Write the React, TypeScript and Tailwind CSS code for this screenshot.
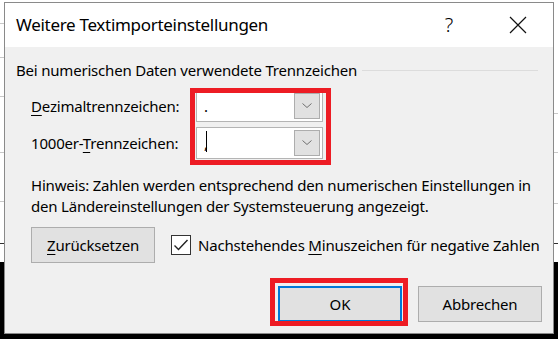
import React from "react";

const font = { fontFamily: '"Noto Sans", "Open Sans", Arial, sans-serif' };

function Chevron() {
  return (
    <svg width="12" height="8" viewBox="0 0 12 8" className="block">
      <path d="M1.5 1.5 L6 5.5 L10.5 1.5" fill="none" stroke="#707070" strokeWidth="1" />
    </svg>
  );
}

function Combo({ value, cursor }: { value: string; cursor?: boolean }) {
  return (
    <div className="flex h-[32px] w-[127px] border border-[#b4b4b4] bg-white p-[2px]">
      <div className="relative flex flex-1 items-center pl-[5px] text-[15px] text-black">
        <span className="leading-none">{value}</span>
        {cursor && <span className="absolute left-[7px] top-[1px] h-[21px] w-px bg-black" />}
      </div>
      <div className="flex w-[26px] items-center justify-center border border-[#adadad] bg-[#e1e1e1]">
        <Chevron />
      </div>
    </div>
  );
}

function Btn({ children, focused }: { children: React.ReactNode; focused?: boolean }) {
  return (
    <div
      className={
        "flex h-[36px] w-[124px] items-center justify-center bg-[#e1e1e1] text-[15px] text-black " +
        (focused ? "border-2 border-[#0078d7]" : "border border-[#adadad]")
      }
    >
      {children}
    </div>
  );
}

export default function App() {
  return (
    <div className="relative h-[339px] w-[558px] overflow-hidden bg-white" style={font}>
      {/* background sheet lines */}
      <div className="absolute left-0 top-[23px] h-px w-[6px] bg-[#c8c8c8]" />
      <div className="absolute left-0 top-[57px] h-px w-[6px] bg-[#c8c8c8]" />
      <div className="absolute left-0 top-[96px] h-px w-[6px] bg-[#c8c8c8]" />
      <div className="absolute left-0 top-[152px] h-px w-[6px] bg-[#c8c8c8]" />
      <div className="absolute left-0 top-[201px] h-px w-[6px] bg-[#c8c8c8]" />
      <div className="absolute left-0 top-[243px] h-px w-[6px] bg-[#303030]" />
      <div className="absolute right-0 top-[113px] h-px w-[6px] bg-[#c8c8c8]" />
      <div className="absolute right-0 top-[152px] h-px w-[6px] bg-[#c8c8c8]" />
      <div className="absolute right-0 top-[203px] h-px w-[6px] bg-[#c8c8c8]" />
      <div className="absolute right-0 top-[243px] h-px w-[6px] bg-[#303030]" />
      <div className="absolute bottom-0 left-0 h-[77px] w-full bg-black" />

      {/* dialog window */}
      <div className="absolute left-[4px] top-[2px] flex h-[332px] w-[550px] flex-col border border-[#8a8a8a]">
        <div className="flex h-[44px] items-center bg-white pl-[11px] text-[17px] text-black">
          <span className="flex-1 tracking-[-0.3px]">Weitere Textimporteinstellungen</span>
          <span className="w-[20px] text-center text-[20px] font-light">?</span>
          <div className="ml-[49px] mr-[25px] flex h-[20px] w-[20px] items-center justify-center">
            <svg width="18" height="18" viewBox="0 0 18 18">
              <path d="M1 1 L17 17 M17 1 L1 17" stroke="#111" strokeWidth="1.2" fill="none" />
            </svg>
          </div>
        </div>

        <div className="relative flex flex-1 flex-col bg-[#f0f0f0] px-[11px] text-[15px] text-black">
          {/* group label */}
          <div className="mt-[13px] flex h-[21px] items-center">
            <span className="tracking-[-0.2px]">Bei numerischen Daten verwendete Trennzeichen</span>
            <div className="ml-[5px] mr-[4px] h-px flex-1 bg-[#dcdcdc]" />
          </div>

          <div className="ml-[15px] mt-[9px] flex flex-col gap-[5px]">
            <div className="flex items-center">
              <span className="w-[165px] tracking-[-0.2px]">
                <span className="underline underline-offset-[3px]">D</span>ezimaltrennzeichen:
              </span>
              <Combo value="." />
            </div>
            <div className="flex items-center">
              <span className="w-[165px] tracking-[-0.2px]">
                1000er-<span className="underline underline-offset-[3px]">T</span>rennzeichen:
              </span>
              <Combo value="," cursor />
            </div>
          </div>

          <div className="ml-[15px] mt-[16px] leading-[21px] tracking-[-0.2px]">
            Hinweis: Zahlen werden entsprechend den numerischen Einstellungen in
            <br />
            den Ländereinstellungen der Systemsteuerung angezeigt.
          </div>

          <div className="ml-[15px] mt-[10px] flex items-center">
            <Btn>
              <span className="tracking-[-0.2px]">
                <span className="underline underline-offset-[3px]">Z</span>urücksetzen
              </span>
            </Btn>
            <div className="ml-[16px] flex h-[20px] w-[20px] items-center justify-center border border-[#333] bg-white">
              <svg width="16" height="14" viewBox="0 0 16 14">
                <path d="M1.5 7.5 L5.5 11.5 L14.5 2" stroke="#222" strokeWidth="1.4" fill="none" />
              </svg>
            </div>
            <span className="ml-[7px] tracking-[-0.2px]">
              Nachstehendes <span className="underline underline-offset-[3px]">M</span>inuszeichen für negative Zahlen
            </span>
          </div>

          <div className="mt-[23px] flex justify-end gap-[16px]">
            <Btn focused>OK</Btn>
            <Btn>
              <span className="tracking-[-0.2px]">Abbrechen</span>
            </Btn>
          </div>
        </div>
      </div>

      {/* red annotation boxes */}
      <div className="pointer-events-none absolute left-[190px] top-[88px] h-[77px] w-[141px] border-[5px] border-[#ed1c24]" />
      <div className="pointer-events-none absolute left-[270px] top-[278px] h-[48px] w-[138px] border-[5px] border-[#ed1c24]" />
    </div>
  );
}
